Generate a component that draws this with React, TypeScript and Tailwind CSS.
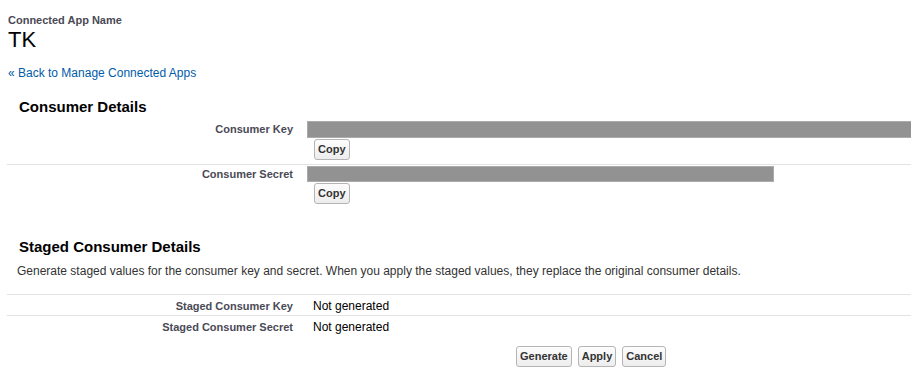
const font = { fontFamily: '"Liberation Sans", Arial, sans-serif' };

function Btn({ children }: { children: string }) {
  return (
    <button className="h-[21px] rounded-[3px] border border-[#b5b5b5] bg-gradient-to-b from-[#fdfdfd] to-[#ededed] px-[3px] text-[11px] font-bold leading-[19px] text-[#333]">
      {children}
    </button>
  );
}

function Label({ children }: { children: string }) {
  return (
    <div className="w-[286px] shrink-0 pt-[1px] text-right text-[11px] font-bold leading-[14px] text-[#4a4a56]">
      {children}
    </div>
  );
}

export default function App() {
  return (
    <div className="h-[379px] w-[911px] overflow-hidden bg-white text-[#000]" style={font}>
      {/* ── Header ── */}
      <div className="pl-[8px] pt-[14px]">
        <div className="text-[11px] font-bold leading-[13px] text-[#4a4a56]">Connected App Name</div>
        <div className="text-[22px] leading-[25px] text-black">TK</div>
        <a href="#" className="mt-[14px] block text-[12px] leading-[14px] text-[#015ba7]">
          « Back to Manage Connected Apps
        </a>
      </div>

      {/* ── Consumer Details ── */}
      <h3 className="mt-[18px] pl-[19px] text-[15px] font-bold leading-[17px] text-black">Consumer Details</h3>
      <div className="mt-[3px] ml-[7px]">
        <div className="flex pt-[3px] pb-[4px]">
          <Label>Consumer Key</Label>
          <div className="flex flex-col pl-[14px]">
            <div className="h-[17px] w-[620px] border border-[#ababab] bg-[#929292]" />
            <div className="mt-[1px] flex pl-[7px]">
              <Btn>Copy</Btn>
            </div>
          </div>
        </div>
        <div className="flex border-t border-[#e3e3e3] pt-[1px]">
          <Label>Consumer Secret</Label>
          <div className="flex flex-col pl-[14px]">
            <div className="h-[16px] w-[467px] border border-[#ababab] bg-[#929292]" />
            <div className="mt-[1px] flex pl-[7px]">
              <Btn>Copy</Btn>
            </div>
          </div>
        </div>
      </div>

      {/* ── Staged Consumer Details ── */}
      <h3 className="mt-[34px] pl-[19px] text-[15px] font-bold leading-[17px] text-black">Staged Consumer Details</h3>
      <p className="mt-[9px] pl-[17px] text-[12px] leading-[14px] text-[#333]">
        Generate staged values for the consumer key and secret. When you apply the staged values, they replace the original consumer details.
      </p>
      <div className="mt-[16px] ml-[7px]">
        <div className="flex items-center border-t border-[#e3e3e3] pt-[3px] pb-[2px]">
          <Label>Staged Consumer Key</Label>
          <div className="pl-[20px] text-[12px] leading-[14px] text-black">Not generated</div>
        </div>
        <div className="flex items-center border-t border-[#e3e3e3] pt-[3px] pb-[2px]">
          <Label>Staged Consumer Secret</Label>
          <div className="pl-[20px] text-[12px] leading-[14px] text-black">Not generated</div>
        </div>
      </div>
      <div className="mt-[10px] flex gap-[6px] pl-[516px]">
        <Btn>Generate</Btn>
        <Btn>Apply</Btn>
        <Btn>Cancel</Btn>
      </div>
    </div>
  );
}
